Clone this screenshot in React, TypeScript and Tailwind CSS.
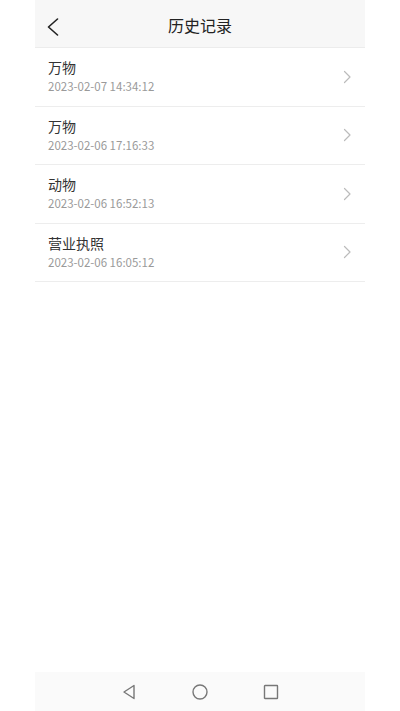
// — data —

const RECORDS = [
  { id: 1, name: '万物', time: '2023-02-07 14:34:12' },
  { id: 2, name: '万物', time: '2023-02-06 17:16:33' },
  { id: 3, name: '动物', time: '2023-02-06 16:52:13' },
  { id: 4, name: '营业执照', time: '2023-02-06 16:05:12' },
]

const FONT = { fontFamily: '"Noto Sans CJK SC", "Noto Sans", sans-serif' }

// — sub-components —

function RecordRow({ name, time }: { readonly name: string; readonly time: string }) {
  return (
    <div className="flex h-[58.5px] items-center justify-between border-b border-[#ededed] pl-[13px] pr-[13px]">
      <div className="flex flex-col">
        <span className="text-[14px] leading-[20px] text-[#333]">{name}</span>
        <span className="text-[11.5px] leading-[19px] text-[#9a9a9a]">{time}</span>
      </div>
      <svg width="9" height="14" viewBox="0 0 9 14" fill="none" stroke="#bbb" strokeWidth="1.2">
        <path d="M1.5 1.5 L7 7 L1.5 12.5" strokeLinecap="round" strokeLinejoin="round" />
      </svg>
    </div>
  )
}

function NavBar() {
  return (
    <div className="flex h-[39px] items-center justify-center gap-[55px] bg-[#fafafa]">
      <svg width="16" height="16" viewBox="0 0 16 16" fill="none" stroke="#777" strokeWidth="1.4">
        <path d="M13 1.5 L3 8 L13 14.5 Z" strokeLinejoin="round" />
      </svg>
      <svg width="16" height="16" viewBox="0 0 16 16" fill="none" stroke="#777" strokeWidth="1.4">
        <circle cx="8" cy="8" r="7" />
      </svg>
      <svg width="16" height="16" viewBox="0 0 16 16" fill="none" stroke="#777" strokeWidth="1.4">
        <rect x="1.5" y="1.5" width="13" height="13" rx="0.5" />
      </svg>
    </div>
  )
}

// — main component —

export default function App() {
  return (
    <div className="flex h-[711px] justify-center bg-white" style={FONT}>
      <div className="flex w-[330px] flex-col">
        <header className="relative flex h-[48px] items-center justify-center border-b border-[#ececec] bg-[#f7f7f7] pt-[3px]">
          <svg
            className="absolute left-[12px] top-[18px]"
            width="12"
            height="18"
            viewBox="0 0 12 18"
            fill="none"
            stroke="#222"
            strokeWidth="1.6"
          >
            <path d="M10.5 1 L1.5 9 L10.5 17" strokeLinecap="round" strokeLinejoin="round" />
          </svg>
          <h1 className="text-[16px] text-[#222]">历史记录</h1>
        </header>
        <div className="flex-1">
          {RECORDS.map((r) => (
            <RecordRow key={r.id} name={r.name} time={r.time} />
          ))}
        </div>
        <NavBar />
      </div>
    </div>
  )
}
